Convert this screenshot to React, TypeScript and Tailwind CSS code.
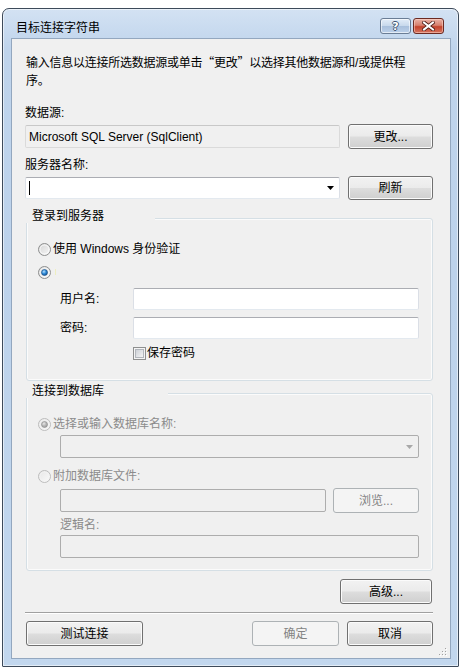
import React from "react";

const FONT = "font-['Liberation_Sans','Noto_Sans_CJK_SC',sans-serif]";
const CJK = "font-['Noto_Sans_CJK_SC',sans-serif]";

const BTN =
  "flex items-center justify-center rounded-[3px] border border-[#707070] bg-[linear-gradient(180deg,#f2f2f2_0%,#ebebeb_48%,#dddddd_52%,#cfcfcf_100%)] shadow-[inset_0_0_0_1px_#fbfbfb] text-black";
const BTN_OFF =
  "flex items-center justify-center rounded-[3px] border border-[#adb2b5] bg-[#f4f4f4] text-[#838383]";

function Button({ w, h = 25, off, children }: { w: number; h?: number; off?: boolean; children: React.ReactNode }) {
  return (
    <div className={off ? BTN_OFF : BTN} style={{ width: w, height: h }}>
      <span className="leading-[14px]">{children}</span>
    </div>
  );
}

function Radio({ checked, off }: { checked?: boolean; off?: boolean }) {
  const id = `${checked ? "c" : "u"}${off ? "d" : "e"}`;
  return (
    <svg width="13" height="13" viewBox="0 0 13 13" className="shrink-0">
      <defs>
        <linearGradient id={`rb-${id}`} x1="0" y1="0" x2="1" y2="1">
          <stop offset="0" stopColor={off ? "#e6e6e6" : "#d4d4d4"} />
          <stop offset="1" stopColor={off ? "#fafafa" : "#f8f8f8"} />
        </linearGradient>
        <radialGradient id={`rd-${id}`} cx="0.4" cy="0.35" r="0.7">
          <stop offset="0" stopColor={off ? "#e8e8e8" : "#b8e1ff"} />
          <stop offset="0.5" stopColor={off ? "#b8b8b8" : "#2f8bd8"} />
          <stop offset="1" stopColor={off ? "#9a9a9a" : "#0d4c8f"} />
        </radialGradient>
      </defs>
      <circle cx="6.5" cy="6.5" r="6" fill={`url(#rb-${id})`} stroke={off ? "#bcbcbc" : "#8e8f8f"} />
      <circle cx="6.5" cy="6.5" r="4.5" fill="none" stroke={off ? "#f4f4f4" : "#ffffff"} strokeOpacity="0.7" />
      {checked && <circle cx="6.5" cy="6.5" r="3" fill={`url(#rd-${id})`} stroke={off ? "#8a8a8a" : "#1b4f86"} strokeWidth="0.6" />}
    </svg>
  );
}

function CheckBox() {
  return (
    <svg width="13" height="13" viewBox="0 0 13 13" className="shrink-0">
      <defs>
        <linearGradient id="cbi" x1="0" y1="0" x2="1" y2="1">
          <stop offset="0" stopColor="#cbcfd5" />
          <stop offset="1" stopColor="#f6f6f6" />
        </linearGradient>
      </defs>
      <rect x="0.5" y="0.5" width="12" height="12" fill="#f4f4f4" stroke="#8e8f8f" />
      <rect x="2.5" y="2.5" width="8" height="8" fill="url(#cbi)" stroke="#b2b6bc" />
    </svg>
  );
}

function GroupBox({ title, h, legendW, children }: { title: string; h: number; legendW: number; children: React.ReactNode }) {
  return (
    <div
      className="relative ml-[1px] w-[407px] rounded-[3px] border border-[#d5dfe5] shadow-[inset_0_0_0_1px_#fbfbfb] flex flex-col"
      style={{ height: h }}
    >
      <div
        className="absolute left-[-2px] top-[-10px] h-[14px] bg-[#f0f0f0] pl-[7px] leading-[14px] text-black"
        style={{ width: legendW }}
      >
        {title}
      </div>
      {children}
    </div>
  );
}

const TB = "rounded-[2px] border border-[#dbdfe6] border-t-[#abadb3] border-b-[#e3e9ef] bg-white";
const TB_OFF = "rounded-[2px] border border-[#adadad] bg-[#f0f0f0]";

export default function App() {
  return (
    <div className={`w-[459px] h-[669px] bg-white pt-[8px] pl-[2px] text-[12px] text-black ${FONT}`}>
      <div className="w-[457px] h-[659px] flex flex-col rounded-t-[7px] rounded-b-[1px] border border-[#3d4a5a] bg-[linear-gradient(180deg,#d3e2f3_0%,#bfd4ec_6%,#bcd2eb_40%,#c2d7ee_100%)] shadow-[inset_0_0_0_1px_rgba(255,255,255,0.55)]">
        {/* title bar */}
        <div className="h-[29px] flex items-start shrink-0">
          <div className="mt-[12px] ml-[13px] leading-[14px] text-[12px] text-black">目标连接字符串</div>
          <div className="ml-auto mr-[14px] mt-[9px] flex gap-[2px]">
            <div className="w-[31px] h-[16px] rounded-[3px] border border-[#6a7d95] bg-[linear-gradient(180deg,#e3edf8_0%,#c8d9ec_48%,#a9c0dc_52%,#bcd1ea_100%)] shadow-[inset_0_0_0_1px_rgba(255,255,255,0.6)] flex items-center justify-center">
              <span className="font-['DejaVu_Sans',sans-serif] font-bold text-[11px] leading-[11px] text-white [text-shadow:1px_0_0_#3f5672,-1px_0_0_#3f5672,0_1px_0_#3f5672,0_-1px_0_#3f5672]">?</span>
            </div>
            <div className="w-[31px] h-[16px] rounded-[3px] border border-[#6b2a22] bg-[linear-gradient(180deg,#eab2a6_0%,#d7806e_45%,#c4432c_55%,#d5745f_100%)] shadow-[inset_0_0_0_1px_rgba(255,220,210,0.5)] flex items-center justify-center">
              <svg width="13" height="10" viewBox="0 0 13 10">
                <path d="M2 1.5 L11 8.5 M11 1.5 L2 8.5" stroke="#4a1a14" strokeWidth="3.6" strokeLinecap="square" />
                <path d="M2 1.5 L11 8.5 M11 1.5 L2 8.5" stroke="#ffffff" strokeWidth="2" strokeLinecap="square" />
              </svg>
            </div>
          </div>
        </div>

        {/* client area */}
        <div className="relative ml-[8px] mr-[7px] mb-[7px] flex-1 bg-[#f0f0f0] shadow-[inset_0_0_0_1px_#93a7bf] pl-[14px] pr-[18px] pt-[15px] flex flex-col">
          <div className="ml-[1px] leading-[18px] whitespace-nowrap tracking-[-0.25px]">
            输入信息以连接所选数据源或单击<span className={CJK}>“</span>更改<span className={CJK}>”</span>以选择其他数据源和/或提供程
            <br />
            序。
          </div>

          <div className="mt-[15px] h-[16px] leading-[16px]">数据源:</div>
          <div className="mt-[3px] h-[25px] flex items-center gap-[8px]">
            <div className="w-[315px] h-[23px] rounded-[2px] border border-[#dadada] border-t-[#c8c8c8] bg-[#f0f0f0] flex items-center pl-[3px]">
              Microsoft SQL Server (SqlClient)
            </div>
            <Button w={85}>更改...</Button>
          </div>

          <div className="mt-[8px] h-[16px] leading-[16px]">服务器名称:</div>
          <div className="mt-[3px] h-[24px] flex items-center gap-[8px]">
            <div className={`${TB} w-[315px] h-[22px] flex items-center pl-[3px] pr-[5px]`}>
              <div className="w-[1px] h-[14px] bg-black" />
              <svg width="7" height="4" viewBox="0 0 7 4" className="ml-auto">
                <path d="M0 0 H7 L3.5 4 Z" fill="#000" />
              </svg>
            </div>
            <Button w={85} h={24}>刷新</Button>
          </div>

          <div className="mt-[18px]">
            <GroupBox title="登录到服务器" h={163} legendW={130}>
              <div className="mt-[22px] h-[16px] pl-[11px] flex items-center gap-[2px]">
                <Radio />
                <span className="leading-[16px]">使用 Windows 身份验证</span>
              </div>
              <div className="mt-[7px] h-[16px] pl-[11px] flex items-center gap-[4px]">
                <Radio checked />
                <div className="w-[1px] h-[6px] bg-[#eeeec0]" />
              </div>
              <div className="mt-[8px] h-[22px] pl-[33px] flex items-center">
                <span className="w-[73px] leading-[16px]">用户名:</span>
                <div className={`${TB} w-[286px] h-[22px]`} />
              </div>
              <div className="mt-[7px] h-[22px] pl-[33px] flex items-center">
                <span className="w-[73px] leading-[16px]">密码:</span>
                <div className={`${TB} w-[286px] h-[22px]`} />
              </div>
              <div className="mt-[6px] h-[16px] pl-[106px] flex items-center gap-[1px]">
                <CheckBox />
                <span className="leading-[16px]">保存密码</span>
              </div>
            </GroupBox>
          </div>

          <div className="mt-[12px]">
            <GroupBox title="连接到数据库" h={178} legendW={143}>
              <div className="mt-[22px] h-[16px] pl-[11px] flex items-center gap-[2px] text-[#8b8b8b]">
                <Radio checked off />
                <span className="leading-[16px]">选择或输入数据库名称:</span>
              </div>
              <div className="mt-[3px] pl-[33px]">
                <div className={`${TB_OFF} w-[359px] h-[23px] flex items-center justify-end pr-[5px]`}>
                  <svg width="7" height="4" viewBox="0 0 7 4">
                    <path d="M0 0 H7 L3.5 4 Z" fill="#a8a8a8" />
                  </svg>
                </div>
              </div>
              <div className="mt-[10px] h-[16px] pl-[11px] flex items-center gap-[2px] text-[#8b8b8b]">
                <Radio off />
                <span className="leading-[16px]">附加数据库文件:</span>
              </div>
              <div className="mt-[4px] h-[25px] pl-[33px] flex items-center gap-[7px]">
                <div className={`${TB_OFF} w-[266px] h-[23px]`} />
                <Button w={86} off>浏览...</Button>
              </div>
              <div className="mt-[4px] h-[16px] pl-[33px] leading-[16px] text-[#8b8b8b]">逻辑名:</div>
              <div className="mt-[2px] pl-[33px]">
                <div className={`${TB_OFF} w-[359px] h-[23px]`} />
              </div>
            </GroupBox>
          </div>

          <div className="mt-[8px] flex justify-end pr-[1px]">
            <Button w={92}>高级...</Button>
          </div>
          <div className="mt-[8px] h-[2px] border-t border-t-[#a0a0a0] border-b border-b-[#ffffff]" />
          <div className="mt-[7px] flex items-center">
            <div className="ml-[1px]">
              <Button w={117}>测试连接</Button>
            </div>
            <div className="ml-auto">
              <Button w={87} off>确定</Button>
            </div>
            <div className="ml-[8px]">
              <Button w={86}>取消</Button>
            </div>
          </div>

          {/* size grip */}
          <svg width="10" height="10" viewBox="0 0 10 10" className="absolute right-[4px] bottom-[3px]">
            {[
              [8, 2], [5, 5], [8, 5], [2, 8], [5, 8], [8, 8],
            ].map(([x, y], i) => (
              <g key={i}>
                <rect x={x} y={y} width="1" height="1" fill="#a0a0a0" />
                <rect x={x + 1} y={y + 1} width="1" height="1" fill="#ffffff" />
              </g>
            ))}
          </svg>
        </div>
      </div>
    </div>
  );
}
